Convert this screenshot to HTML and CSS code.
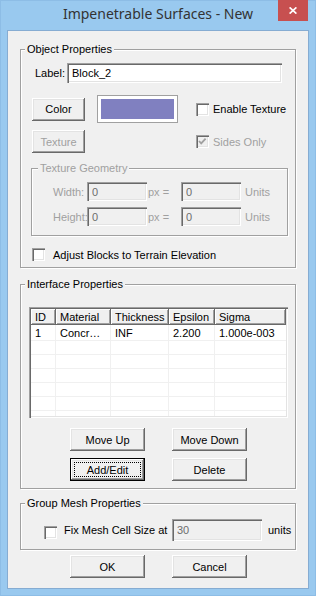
FILE: index.html
```html
<!DOCTYPE html>
<html lang="en">
<head>
  <meta charset="UTF-8">
  <meta name="viewport" content="width=device-width, initial-scale=1.0">
  <title>Impenetrable Surfaces - New</title>
  <link rel="stylesheet" href="styles.css">
</head>
<body>
  <div class="window">
    <div class="titlebar">
      <span class="title">Impenetrable Surfaces - New</span>
      <button class="close" title="Close">
        <svg width="8" height="7" viewBox="0 0 8 7"><path d="M0.6 0.4 L7.4 6.6 M7.4 0.4 L0.6 6.6" stroke="#fff" stroke-width="1.7"/></svg>
      </button>
    </div>

    <div class="client">
      <div class="group">
        <span class="caption">Object Properties</span>
        <div class="label-row">
          <label>Label:</label>
          <input class="field label-input" type="text" value="Block_2">
        </div>
        <div class="color-grid">
          <button class="btn btn-small">Color</button>
          <div class="swatch"><div class="swatch-fill"></div></div>
          <label class="check"><span class="box"></span>Enable Texture</label>
          <button class="btn btn-small" disabled>Texture</button>
          <span></span>
          <label class="check disabled">
            <span class="box"><svg width="13" height="13" viewBox="0 0 13 13"><polyline points="3,6 5.2,8.4 9.6,3.6" fill="none" stroke="#a0a0a0" stroke-width="1.8"/></svg></span>
            Sides Only
          </label>
        </div>
        <div class="group geometry disabled">
          <span class="caption caption-geo">Texture Geometry</span>
          <div class="geo-grid">
            <span class="geo-label">Width:</span>
            <input class="field" type="text" value="0" disabled>
            <span class="geo-px">px =</span>
            <input class="field" type="text" value="0" disabled>
            <span class="geo-units">Units</span>
            <span class="geo-label">Height:</span>
            <input class="field" type="text" value="0" disabled>
            <span class="geo-px">px =</span>
            <input class="field" type="text" value="0" disabled>
            <span class="geo-units">Units</span>
          </div>
        </div>
        <label class="check adjust"><span class="box"></span>Adjust Blocks to Terrain Elevation</label>
      </div>

      <div class="group interface">
        <span class="caption">Interface Properties</span>
        <div class="listview">
          <div class="list-body">
            <table>
              <thead>
                <tr><th class="c-id">ID</th><th class="c-mat">Material</th><th class="c-thick">Thickness</th><th class="c-eps">Epsilon</th><th class="c-sig">Sigma</th></tr>
              </thead>
              <tbody>
                <tr class="first"><td>1</td><td>Concr…</td><td>INF</td><td>2.200</td><td>1.000e-003</td></tr>
                <tr><td></td><td></td><td></td><td></td><td></td></tr>
                <tr><td></td><td></td><td></td><td></td><td></td></tr>
                <tr><td></td><td></td><td></td><td></td><td></td></tr>
                <tr><td></td><td></td><td></td><td></td><td></td></tr>
                <tr><td></td><td></td><td></td><td></td><td></td></tr>
                <tr><td></td><td></td><td></td><td></td><td></td></tr>
              </tbody>
            </table>
          </div>
        </div>
        <div class="button-grid">
          <button class="btn">Move Up</button>
          <button class="btn">Move Down</button>
          <button class="btn btn-default">Add/Edit</button>
          <button class="btn">Delete</button>
        </div>
      </div>

      <div class="group mesh">
        <span class="caption">Group Mesh Properties</span>
        <div class="mesh-row">
          <label class="check"><span class="box"></span>Fix Mesh Cell Size at</label>
          <input class="field mesh-input" type="text" value="30" disabled>
          <span class="mesh-units">units</span>
        </div>
      </div>

      <div class="button-grid dialog-buttons">
        <button class="btn">OK</button>
        <button class="btn">Cancel</button>
      </div>
    </div>
  </div>
</body>
</html>
```

FILE: styles.css
```css
body {
  margin: 0;
  font-family: "Liberation Sans", Arial, sans-serif;
  font-size: 11px;
  color: #000;
}

.window {
  width: 316px;
  height: 596px;
  box-sizing: border-box;
  border: 1px solid #8dbde6;
  background-color: #99c9ef;
  padding: 0 6px 6px;
}

/* title bar */
.titlebar {
  height: 29px;
  display: grid;
  grid-template-columns: 1fr auto 1fr;
}

.title {
  grid-column: 2;
  font-family: "Noto Sans", sans-serif;
  font-size: 14px;
  line-height: 26px;
  color: #333;
  white-space: nowrap;
}

.close {
  grid-column: 3;
  justify-self: end;
  width: 30px;
  height: 21px;
  margin: -1px 1px 0 0;
  padding: 0;
  border: none;
  background-color: #c75050;
  display: flex;
  align-items: center;
  justify-content: center;
}

.client {
  height: 559px;
  box-sizing: border-box;
  border: 1px solid #86acd2;
  background-color: #f0f0f0;
  padding: 18px 0 0 12px;
}

/* group boxes */
.group {
  display: flex;
  flex-direction: column;
  align-items: flex-start;
  width: 276px;
  box-sizing: border-box;
  border: 1px solid #a0a0a0;
  box-shadow: inset 1px 1px #fff, 1px 1px #fff;
  padding-bottom: 6px;
}

.caption {
  margin: -7px 0 0 4px;
  padding: 0 2px;
  line-height: 13px;
  background-color: #f0f0f0;
  white-space: nowrap;
}

.caption-geo {
  margin-left: 6px;
}

.disabled {
  color: #a0a0a0;
}

/* inputs */
.field {
  box-sizing: border-box;
  height: 20px;
  padding: 0 0 0 5px;
  border: none;
  outline: none;
  background-color: #fff;
  box-shadow: inset 1px 1px #a0a0a0, inset 2px 2px #696969, inset -1px -1px #fff, inset -2px -2px #e3e3e3;
  font: inherit;
  color: #000;
}

.field:disabled {
  background-color: #f0f0f0;
  color: #6d6d6d;
}

.label-row {
  display: flex;
  align-items: center;
  margin: 7px 0 0 14px;
}

.label-row label {
  width: 32px;
}

.label-input {
  width: 215px;
}

/* buttons */
.btn {
  width: 75px;
  height: 23px;
  padding: 0;
  border: none;
  background-color: #f0f0f0;
  box-shadow: inset -1px -1px #696969, inset 1px 1px #fff, inset -2px -2px #a0a0a0, inset 2px 2px #e3e3e3;
  font: inherit;
  color: #000;
}

.btn:disabled {
  color: #a0a0a0;
}

.btn-small {
  width: 53px;
}

.btn-default {
  box-shadow: inset 0 0 0 1px #000, inset -2px -2px #696969, inset 2px 2px #fff, inset -3px -3px #a0a0a0, inset 3px 3px #e3e3e3;
  outline: 1px dotted #000;
  outline-offset: -5px;
}

.color-grid {
  display: grid;
  grid-template-columns: 65px 99px auto;
  grid-template-rows: 28px 23px;
  row-gap: 7px;
  align-items: center;
  margin: 12px 0 0 11px;
}

.swatch {
  width: 81px;
  height: 28px;
  box-sizing: border-box;
  border: 1px solid #a0a0a0;
  padding: 3px;
  background-color: #fff;
}

.swatch-fill {
  height: 100%;
  background-color: #8080c0;
}

/* checkboxes */
.check {
  display: flex;
  align-items: center;
  gap: 4px;
  white-space: nowrap;
}

.box {
  width: 13px;
  height: 13px;
  flex-shrink: 0;
  box-sizing: border-box;
  background-color: #fff;
  box-shadow: inset 1px 1px #a0a0a0, inset 2px 2px #696969, inset -1px -1px #fff, inset -2px -2px #e3e3e3;
}

.box svg {
  display: block;
}

.check.disabled .box {
  background-color: #f0f0f0;
}

.adjust {
  margin: 12px 0 0 11px;
  gap: 8px;
}

/* texture geometry */
.geometry {
  width: 257px;
  margin: 15px 0 0 10px;
  padding-bottom: 9px;
}

.geo-grid {
  display: grid;
  grid-template-columns: 55px 60px 34px 60px auto;
  grid-template-rows: 19px 19px;
  row-gap: 6px;
  align-items: center;
  margin-top: 7px;
}

.geo-grid .field {
  width: 60px;
  height: 19px;
}

.geo-label {
  padding-left: 21px;
  white-space: nowrap;
}

.geo-px {
  padding-left: 1px;
}

.geo-units {
  padding-left: 4px;
}

/* interface list */
.interface {
  margin-top: 16px;
  padding-bottom: 7px;
}

.listview {
  width: 259px;
  height: 111px;
  box-sizing: border-box;
  margin: 16px 0 0 8px;
  padding: 2px;
  background-color: #fff;
  box-shadow: inset 1px 1px #a0a0a0, inset 2px 2px #696969, inset -1px -1px #fff, inset -2px -2px #e3e3e3;
}

.list-body {
  height: 107px;
  overflow: hidden;
}

.listview table {
  width: 255px;
  table-layout: fixed;
  border-collapse: separate;
  border-spacing: 0;
}

.listview th {
  box-sizing: border-box;
  height: 16px;
  padding: 0 0 0 4px;
  text-align: left;
  font-weight: normal;
  background-color: #f0f0f0;
  box-shadow: inset -1px -1px #696969, inset 1px 1px #fff, inset -2px -2px #a0a0a0;
  white-space: nowrap;
}

.c-id { width: 25px; }
.c-mat { width: 55px; }
.c-thick { width: 58px; }
.c-eps { width: 46px; }
.c-sig { width: 71px; }

.listview td {
  box-sizing: border-box;
  height: 14px;
  padding: 0 0 0 4px;
  border-right: 1px solid #f0f0f0;
  border-bottom: 1px solid #f0f0f0;
  white-space: nowrap;
  overflow: hidden;
}

.listview td:last-child {
  border-right: none;
}

.listview tr.first td {
  height: 16px;
  padding-top: 1px;
}

.button-grid {
  display: grid;
  grid-template-columns: 75px 75px;
  column-gap: 27px;
  row-gap: 7px;
  margin: 10px 0 0 49px;
}

/* mesh */
.mesh {
  margin-top: 14px;
  padding-bottom: 8px;
}

.mesh-row {
  display: grid;
  grid-template-columns: 128px 90px auto;
  align-items: center;
  margin: 9px 0 0 23px;
}

.mesh-row .check {
  gap: 7px;
}

.mesh-row .box {
  margin-top: 4px;
}

.mesh-input {
  width: 90px;
  height: 22px;
}

.mesh-units {
  padding-left: 6px;
}

.dialog-buttons {
  margin: 5px 0 0 50px;
}
```
